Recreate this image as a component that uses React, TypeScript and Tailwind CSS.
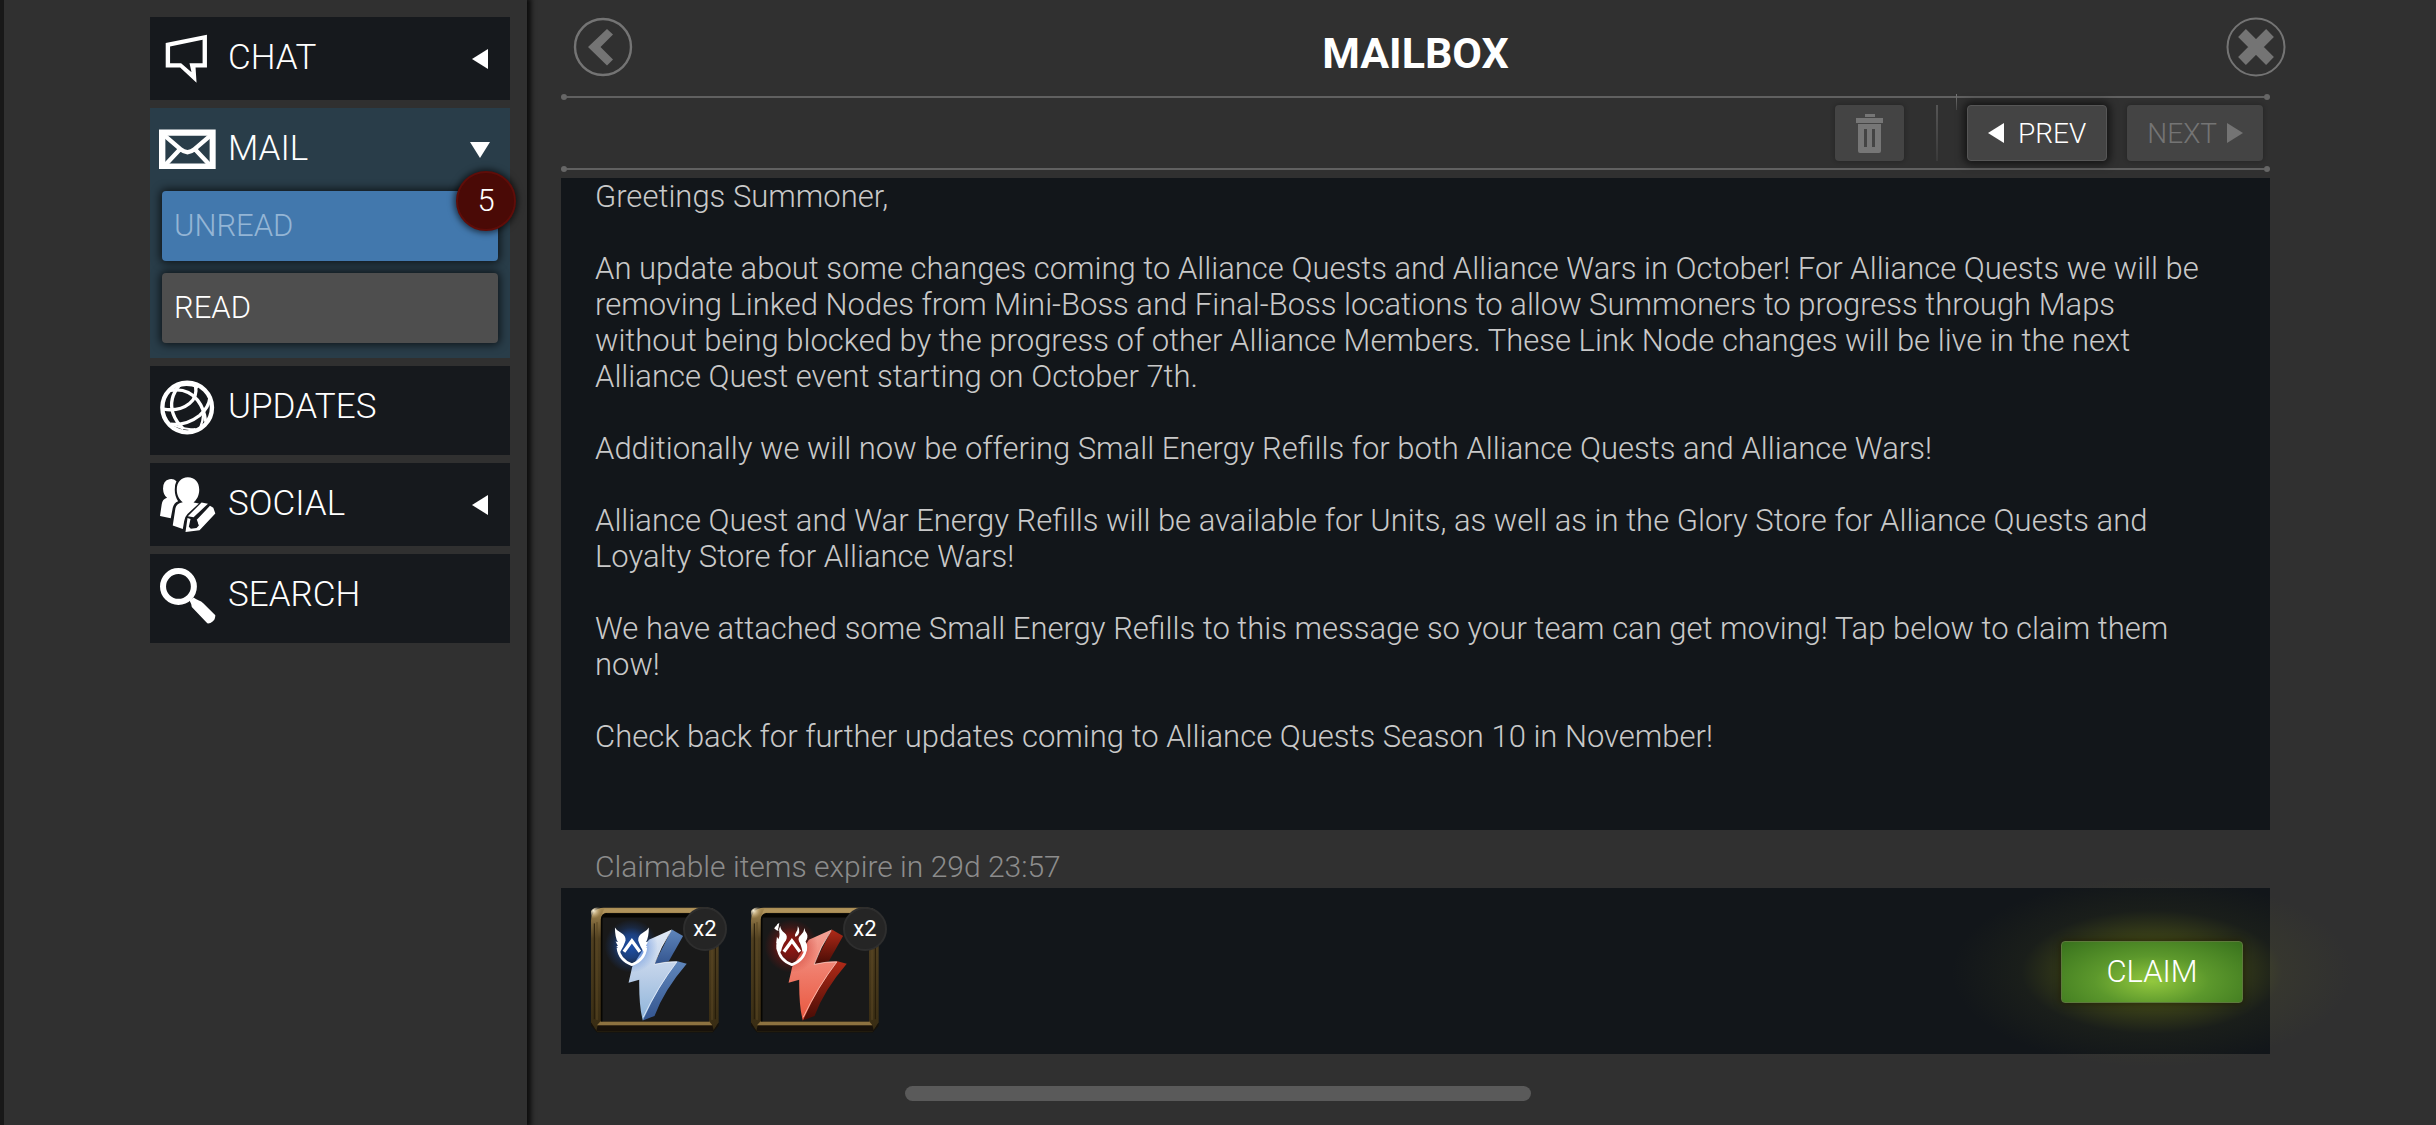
import type { ReactNode } from "react";
import { useState } from "react";
import clsx from "clsx";

type Tone = "blue" | "red";

const REWARDS: { id: string; label: string; tone: Tone; count: number }[] = [
  { id: "quest", label: "Small Alliance Quest Energy Refill", tone: "blue", count: 2 },
  { id: "war", label: "Small Alliance War Energy Refill", tone: "red", count: 2 },
];

const BOLT_COLORS = {
  blue: { glow: "#1f5fd0", top: "#dfe8f5", mid: "#bccfe8", low: "#8db4da", side: "#5f86bb", sideLow: "#34558f", edge: "#f2f7ff" },
  red: { glow: "#b81510", top: "#f4a296", mid: "#ef7a68", low: "#e9573f", side: "#b02a18", sideLow: "#480c05", edge: "#ffd2c8" },
};

function ChatIcon() {
  return (
    <svg viewBox="88 89 170 170" className="size-[57px]" fill="#fff" aria-hidden="true">
      <path
        fillRule="evenodd"
        d="M108 128L231 103V201H197L200 246L151 201H108ZM121 138V188H154L185 215L179 188H218V118Z"
      />
    </svg>
  );
}

function MailIcon() {
  return (
    <svg viewBox="88 360 170 170" className="size-[57px]" aria-hidden="true">
      <path fill="#fff" fillRule="evenodd" d="M88 385H257V503H88ZM107 404V487H239V404Z" />
      <path
        fill="none"
        stroke="#fff"
        strokeWidth="13"
        d="M104 403L152 444Q173 462 194 444L242 403M108 490L150 445M238 490L196 445"
      />
    </svg>
  );
}

function GlobeIcon() {
  return (
    <svg viewBox="87 87 170 170" className="size-[57px]" fill="none" stroke="#fff" aria-hidden="true">
      <circle cx="171" cy="172" r="74" strokeWidth="13" />
      <g strokeWidth="10">
        <path d="M101 177Q148 184 178 160Q202 142 196 106" />
        <path d="M120 121Q172 112 202 150Q222 176 226 214" />
        <path d="M150 103Q114 145 129 190Q137 214 160 236" />
        <path d="M121 222Q170 226 208 196Q236 172 239 142" />
        <path d="M141 110Q170 98 204 112" strokeWidth="7" />
        <path d="M219 192Q218 212 210 232" strokeWidth="7" />
        <path d="M134 226Q165 240 196 236" strokeWidth="6" />
      </g>
    </svg>
  );
}

function SocialIcon() {
  return (
    <svg viewBox="87 376 170 170" className="size-[57px]" fill="#fff" aria-hidden="true">
      <path d="M139 392Q130 383 118 386Q99 390 99 414Q100 433 111 441Q97 445 95 461L90 495L122 502L128 471Q131 456 144 451Q134 436 134 417Q134 401 139 392Z" />
      <path d="M173 380C194 380 207 395 207 417C207 436 198 448 190 455L206 458L172 489Q163 498 162 511L158 534L128 524L136 472Q139 457 158 454C148 447 140 434 140 417C140 395 153 380 173 380Z" />
      <path d="M214 455L233 459L190 499L173 496Z" />
      <path d="M239 465L249 471L255 488L208 538L166 543L172 501L181 504L176 527L182 533L199 531L206 524L199 507Z" />
      <path d="M184 515L200 506L203 518L194 529L180 531Z" fill="#16191d" />
    </svg>
  );
}

function SearchIcon() {
  return (
    <svg viewBox="87 650 170 170" className="size-[57px]" aria-hidden="true">
      <circle cx="145" cy="708" r="46" fill="none" stroke="#fff" strokeWidth="18" />
      <path d="M178 750L190 741Q196 746 206 750Q213 752 219 758L255 794Q255 808 246 813Q240 819 231 818L189 774Q183 768 183 760Z" fill="#fff" />
    </svg>
  );
}

function Triangle({ dir }: { dir: "left" | "right" | "down" }) {
  return (
    <svg
      viewBox="0 0 20 20"
      className={clsx("size-5 shrink-0", dir === "right" && "rotate-180", dir === "down" && "-rotate-90")}
      fill="currentColor"
      aria-hidden="true"
    >
      <path d="M2 10L18 0V20Z" />
    </svg>
  );
}

function TrashIcon() {
  return (
    <svg viewBox="0 0 27 39" className="h-[39px] w-[27px]" fill="#767676" aria-hidden="true">
      <path d="M9 0H19V3H9ZM0 4H27V9H0Z" />
      <path fillRule="evenodd" d="M2 10H25V37Q25 39 23 39H4Q2 39 2 37ZM8 15V33H11V15ZM16 15V33H19V15Z" />
    </svg>
  );
}

function BackIcon() {
  return (
    <svg viewBox="0 0 60 60" className="size-[60px]" aria-hidden="true">
      <circle cx="30" cy="30" r="28" fill="none" stroke="#747474" strokeWidth="2.4" />
      <path d="M34 12L40 17.500L27.500 30L40 42.500L34 48.500L15 30Z" fill="#747474" />
    </svg>
  );
}

function CloseIcon() {
  return (
    <svg viewBox="0 0 60 60" className="size-[60px]" aria-hidden="true">
      <circle cx="30" cy="30" r="28.500" fill="none" stroke="#747474" strokeWidth="2" />
      <path d="M16 16L44 44M44 16L16 44" stroke="#747474" strokeWidth="11" />
    </svg>
  );
}

function WingEmblem() {
  return (
    <g fill="#fff">
      <path d="M134 82Q139 92 152 98Q167 106 166 121Q163 130 159 139L150 155Q146 150 145 145L138 138L143 138L136 124L143 126Q134 113 134 82Z" />
      <path d="M236 82Q231 92 218 98Q203 106 204 121Q207 130 211 139L220 155Q224 150 225 145L232 138L227 138L234 124L227 126Q236 113 236 82Z" />
    </g>
  );
}

function FlameEmblem() {
  return (
    <g fill="#fff">
      <path d="M150 78Q151 90 163 99Q174 108 167 121Q157 132 152 155L140 152Q135 132 143 119Q150 109 147 96Q145 86 150 78Z" />
      <path d="M223 84Q223 94 230 101Q235 112 226 124Q234 136 229 152L217 155Q212 132 207 125Q201 114 212 105Q221 98 223 84Z" />
      <path d="M147 69Q140 72 139 76Q133 80 132 85Q139 92 145 93Q142 86 145 82Z" />
      <path d="M203 78Q208 86 207 97Q204 108 196 111Q192 104 197 98Q203 92 203 78Z" />
      <path d="M140 110L138 128L142 134L150 126Z" />
    </g>
  );
}

function BoltArt({ tone }: { tone: Tone }) {
  const c = BOLT_COLORS[tone];
  return (
    <svg viewBox="62 21 385 378" className="h-[126px] w-[128px]" aria-hidden="true">
      <defs>
        <linearGradient id={`${tone}-frame`} x1="0" y1="0" x2="0" y2="1">
          <stop offset="0" stopColor="#a88b53" />
          <stop offset="0.25" stopColor="#4f3f20" />
          <stop offset="1" stopColor="#382c13" />
        </linearGradient>
        <linearGradient id={`${tone}-face`} x1="0" y1="0" x2="0" y2="1">
          <stop offset="0" stopColor={c.top} />
          <stop offset="0.5" stopColor={c.mid} />
          <stop offset="1" stopColor={c.low} />
        </linearGradient>
        <linearGradient id={`${tone}-side`} x1="0" y1="0" x2="0" y2="1">
          <stop offset="0" stopColor={c.side} />
          <stop offset="1" stopColor={c.sideLow} />
        </linearGradient>
        <radialGradient id={`${tone}-glow`}>
          <stop offset="0" stopColor={c.glow} stopOpacity="0.8" />
          <stop offset="0.45" stopColor={c.glow} stopOpacity="0.55" />
          <stop offset="0.7" stopColor={c.glow} stopOpacity="0.22" />
          <stop offset="1" stopColor={c.glow} stopOpacity="0" />
        </radialGradient>
        <radialGradient id={`${tone}-shine`} cx="0.2" cy="0.2">
          <stop offset="0" stopColor="#fff6dc" />
          <stop offset="1" stopColor="#c9ab72" stopOpacity="0" />
        </radialGradient>
      </defs>

      <path d="M100 23H412Q446 23 446 60V368L428 396H80L62 368V62Q64 24 100 23Z" fill={`url(#${tone}-frame)`} />
      <path d="M62 368L80 396H428L446 368V378L428 398H80L62 378Z" fill="#17120a" />
      <path d="M82 376H427L432 394H78Z" fill="#17110a" />
      <path d="M90 365H418L427 376H80Z" fill="#8d7240" />
      <path d="M72 70V358M436 130V358" stroke="#241a09" strokeWidth="3" />
      <path d="M80 66V360M426 130V360" stroke="#5c4824" strokeWidth="3" />
      <path d="M102 25H405V37H110Q94 38 90 54Z" fill="#b0935b" />
      <rect x="60" y="22" width="48" height="48" rx="20" fill={`url(#${tone}-shine)`} />
      <path d="M110 39H417V365H92V58Q93 40 110 39Z" fill="#191919" />
      <path d="M110 39H417V52H98Q101 40 110 39Z" fill="#060502" />
      <path d="M94 364V58Q95 42 110 41" fill="none" stroke="#060502" strokeWidth="5" />

      <path d="M305 88L339 108L296 184L252 193Z" fill={`url(#${tone}-side)`} />
      <path d="M322 184L350 191Q282 270 253 348L218 362Q230 290 322 184Z" fill={`url(#${tone}-side)`} />
      <path
        d="M236 119L305 88Q272 140 252 193Q290 184 322 184Q262 262 218 362Q206 320 207 239L175 248L186 200Z"
        fill={`url(#${tone}-face)`}
      />
      <path d="M303 92Q270 140 252 193Q290 184 320 186Q262 262 219 352" fill="none" stroke={c.edge} strokeWidth="3" opacity="0.7" />

      <circle cx="183" cy="138" r="80" fill={`url(#${tone}-glow)`} />
      <path d="M143 143Q147 181 185 194Q223 181 227 143" fill="none" stroke="#fff" strokeWidth="8" />
      <path d="M161 155L185 122L209 155" fill="none" stroke="#fff" strokeWidth="10" />
      {tone === "blue" ? <WingEmblem /> : <FlameEmblem />}
    </svg>
  );
}

function NavHeader({
  icon,
  label,
  arrow,
}: {
  icon: ReactNode;
  label: string;
  arrow?: "left" | "down";
}) {
  return (
    <button type="button" className="flex h-[83px] w-full items-center gap-3 pr-5 pl-[9px] text-left text-[35px] leading-10 text-white">
      {icon}
      <span className="flex-1 pb-0.5">{label}</span>
      {arrow && <Triangle dir={arrow} />}
    </button>
  );
}

function NavItem({ children, active, tall }: { children: ReactNode; active?: boolean; tall?: boolean }) {
  return (
    <li className={clsx(active ? "bg-[#293d49]" : "bg-[#16191d]", tall && "pb-1.5")}>
      {children}
    </li>
  );
}

function Sidebar() {
  const [folder, setFolder] = useState("unread");

  const folderClass = (name: string) =>
    clsx(
      "relative flex h-[70px] w-full items-center rounded px-3 text-left text-[31px] leading-9 shadow-[0_0_8px_2px_rgba(0,0,0,0.65)]",
      folder === name ? "bg-[#4278ad] text-[#94b5d5]" : "bg-[#4e4e4e] text-white"
    );

  return (
    <nav className="relative z-10 w-[527px] shrink-0 border-l-4 border-[#181818] pt-[17px] pr-[17px] pl-[146px] shadow-[2px_0_5px_2px_#0c0c0c]">
      <ul className="flex flex-col gap-2">
        <NavItem>
          <NavHeader icon={<ChatIcon />} label="CHAT" arrow="left" />
        </NavItem>
        <NavItem active>
          <NavHeader icon={<MailIcon />} label="MAIL" arrow="down" />
          <div className="flex flex-col gap-3 px-3 pb-[15px]">
            <button type="button" className={folderClass("unread")} onClick={() => setFolder("unread")}>
              UNREAD
              <span className="absolute -top-5 -right-[18px] flex size-[60px] items-center justify-center rounded-full border-2 border-[#5f0d09] bg-[#4a0a06] text-[31px] text-white shadow-[0_0_6px_2px_rgba(0,0,0,0.6)]">
                5
              </span>
            </button>
            <button type="button" className={folderClass("read")} onClick={() => setFolder("read")}>
              READ
            </button>
          </div>
        </NavItem>
        <NavItem tall>
          <NavHeader icon={<GlobeIcon />} label="UPDATES" />
        </NavItem>
        <NavItem>
          <NavHeader icon={<SocialIcon />} label="SOCIAL" arrow="left" />
        </NavItem>
        <NavItem tall>
          <NavHeader icon={<SearchIcon />} label="SEARCH" />
        </NavItem>
      </ul>
    </nav>
  );
}

function Rule() {
  return (
    <div className="flex h-1.5 items-center">
      <span className="size-1.5 rounded-full bg-[#666]" />
      <span className="h-0.5 flex-1 bg-[#606060]" />
      <span className="size-1.5 rounded-full bg-[#666]" />
    </div>
  );
}

function Toolbar() {
  return (
    <div className="relative flex h-[66px] items-center justify-end pr-[7px] text-[28px] leading-9">
      <button
        type="button"
        aria-label="Delete message"
        className="flex h-14 w-[69px] items-center justify-center rounded bg-[#444] shadow-[0_0_4px_1px_rgba(0,0,0,0.2)]"
      >
        <TrashIcon />
      </button>
      <span className="ml-8 h-14 w-0.5 bg-linear-to-b from-[#555] via-[#484848] to-[#3a3a3a]" />
      <span className="absolute -top-1.5 right-[313px] h-4 w-px bg-linear-to-b from-[#777] to-[#444]" />
      <button
        type="button"
        className="ml-[29px] flex h-14 items-center gap-3 rounded border border-[#565656] bg-[#444] pr-5 pl-[18px] text-white shadow-[0_0_8px_3px_rgba(0,0,0,0.6)]"
      >
        <Triangle dir="left" />
        <span className="pt-0.5">PREV</span>
      </button>
      <button
        type="button"
        disabled
        className="ml-5 flex h-14 items-center gap-2 rounded bg-[#444] pr-[18px] pl-5 text-[#747474] shadow-[0_0_4px_1px_rgba(0,0,0,0.2)]"
      >
        <span className="pt-0.5">NEXT</span>
        <Triangle dir="right" />
      </button>
    </div>
  );
}

function Message() {
  return (
    <article className="flex flex-1 flex-col gap-9 bg-[#12161a] px-[34px] pt-px text-[31px] leading-9 text-[#c9c9c9]">
      <p>Greetings Summoner,</p>
      <p>
        An update about some changes coming to Alliance Quests and Alliance Wars in October! For Alliance Quests we will be
        <br />
        removing Linked Nodes from Mini-Boss and Final-Boss locations to allow Summoners to progress through Maps
        <br />
        without being blocked by the progress of other Alliance Members. These Link Node changes will be live in the next
        <br />
        Alliance Quest event starting on October 7th.
      </p>
      <p>Additionally we will now be offering Small Energy Refills for both Alliance Quests and Alliance Wars!</p>
      <p>
        Alliance Quest and War Energy Refills will be available for Units, as well as in the Glory Store for Alliance Quests and
        <br />
        Loyalty Store for Alliance Wars!
      </p>
      <p>
        We have attached some Small Energy Refills to this message so your team can get moving! Tap below to claim them
        <br />
        now!
      </p>
      <p>Check back for further updates coming to Alliance Quests Season 10 in November!</p>
    </article>
  );
}

function ClaimBar() {
  return (
    <section className="flex h-[166px] items-start justify-between bg-[#12161a] pt-[19px] pr-[27px] pl-[30px]">
      <ul className="flex gap-8">
        {REWARDS.map((reward) => (
          <li key={reward.id} className="relative" aria-label={reward.label}>
            <BoltArt tone={reward.tone} />
            <span className="absolute top-0 -right-2 flex size-11 items-center justify-center rounded-full border-2 border-[#2e2e2e] bg-[#252525] text-[22px] leading-6 font-normal text-white">
              x{reward.count}
            </span>
          </li>
        ))}
      </ul>
      <div className="relative mt-[34px]">
        <div className="pointer-events-none absolute -inset-x-[110px] -inset-y-[64px] bg-[radial-gradient(closest-side,rgba(150,165,20,0.65),rgba(130,140,20,0.34)_38%,rgba(120,125,30,0.08)_65%,transparent)]" />
        <button
          type="button"
          className="relative h-[62px] w-[182px] rounded border border-[#5d7a3c] bg-[radial-gradient(ellipse_at_50%_65%,#93c83e,#5c982c_45%,#38721d)] text-[31px] leading-9 text-white shadow-[0_0_6px_1px_rgba(30,25,0,0.7)]"
        >
          CLAIM
        </button>
      </div>
    </section>
  );
}

export default function App() {
  return (
    <div className="relative flex min-h-screen bg-[#303030] font-['Roboto',sans-serif] font-light">
      <Sidebar />
      <main className="flex min-w-0 flex-1 flex-col pr-[166px] pb-[71px] pl-[34px]">
        <header className="grid h-[94px] grid-cols-[1fr_auto_1fr] items-center">
          <button type="button" aria-label="Back" className="ml-3 justify-self-start">
            <BackIcon />
          </button>
          <h1 className="pt-3 text-[43px] leading-[48px] font-bold text-white">MAILBOX</h1>
          <button type="button" aria-label="Close" className="-mr-4 justify-self-end">
            <CloseIcon />
          </button>
        </header>
        <Rule />
        <Toolbar />
        <Rule />
        <div className="flex flex-1 flex-col pt-1.5">
          <Message />
          <p className="px-[34px] pt-[19px] pb-[3px] text-[30px] leading-9 text-[#8c8c8c]">
            Claimable items expire in 29d 23:57
          </p>
          <ClaimBar />
        </div>
      </main>
      <div className="absolute bottom-6 left-1/2 h-[15px] w-[626px] -translate-x-1/2 rounded-full bg-[#5a5a5a]" />
    </div>
  );
}
